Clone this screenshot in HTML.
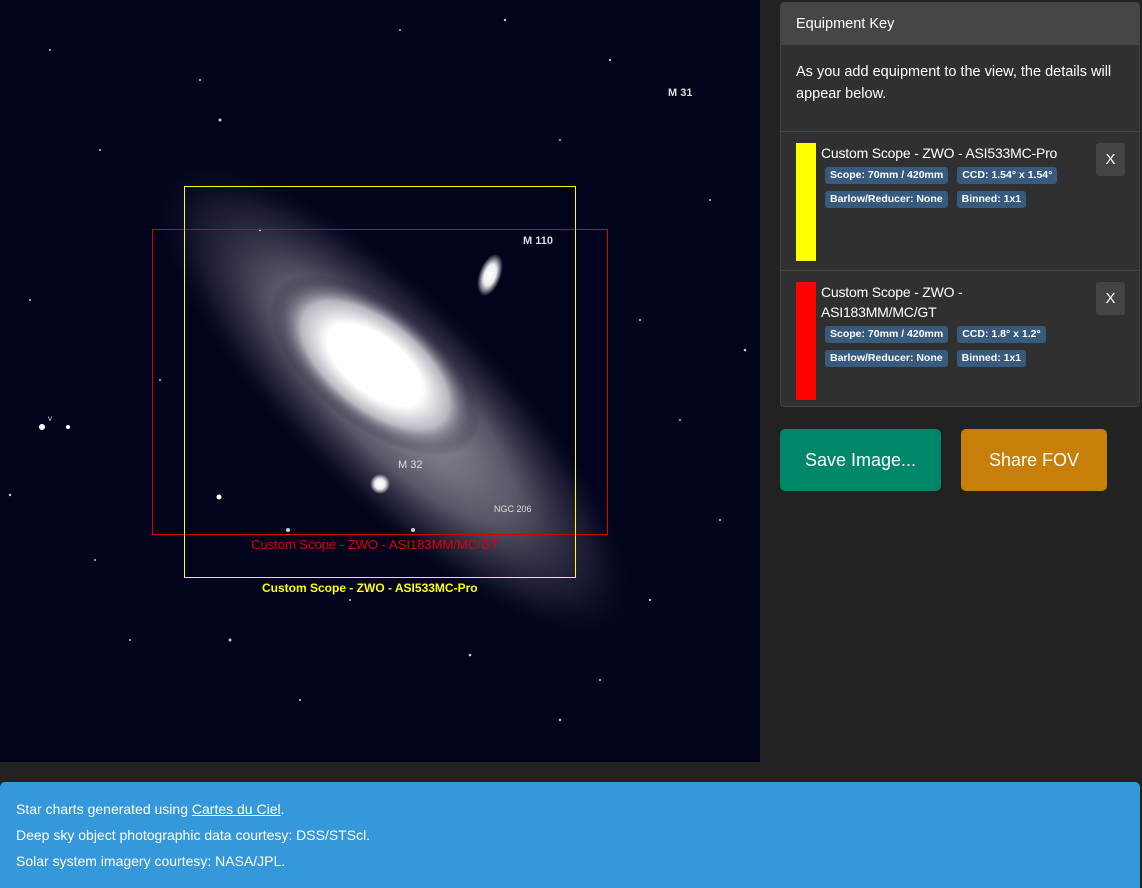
<!DOCTYPE html>
<html><head><meta charset="utf-8"><style>
body{margin:0;width:1142px;height:888px;background:#222;font-family:"Liberation Sans",sans-serif;position:relative;overflow:hidden;color:#fff}
.sky{position:absolute;left:0;top:0;width:760px;height:762px;background:#02031d}
.panel{position:absolute;left:780px;top:2px;width:358px;height:403px;background:#303030;border:1px solid #444;border-radius:4px;overflow:hidden}
.hd{height:42px;background:#464646;font-size:14.5px;line-height:42px;padding-left:15px}
.intro{font-size:14.5px;line-height:22px;padding:16px 15px 0;height:70px;border-bottom:1px solid #444}
.item{position:relative;height:138px;border-bottom:1px solid #444}
.bar{position:absolute;left:15px;top:11px;width:20px;height:118px}
.tt{position:absolute;left:40px;top:11px;font-size:14px;line-height:20px;width:270px;letter-spacing:-0.2px}
.x{position:absolute;right:14px;top:11px;width:29px;height:33px;background:#444;border-radius:3px;text-align:center;line-height:33px;font-size:15px}
.b{display:inline-block;background:#375a7f;font-size:10.5px;font-weight:bold;padding:2px 5px;border-radius:3px;margin:3px 5px 3px 4px;line-height:13px;letter-spacing:0}
.btn{position:absolute;top:429px;height:62px;border-radius:5px;font-size:18px;line-height:62px;text-align:center}
.ft{position:absolute;left:0;top:782px;width:1140px;height:106px;background:#3498db;border-radius:5px 5px 0 0;font-size:14px;line-height:26px;padding:14px 16px 0;box-sizing:border-box}
</style></head><body>
<div class="sky">
<svg width="760" height="762" viewBox="0 0 760 762">
<defs>
<radialGradient id="g1"><stop offset="0" stop-color="#fff"/><stop offset=".45" stop-color="#fff"/><stop offset=".7" stop-color="#c0c0c8" stop-opacity=".9"/><stop offset="1" stop-color="#02031d" stop-opacity="0"/></radialGradient>
<radialGradient id="g2"><stop offset="0" stop-color="#b0b0b8" stop-opacity=".9"/><stop offset=".5" stop-color="#7a7a86" stop-opacity=".7"/><stop offset=".8" stop-color="#3a3a50" stop-opacity=".4"/><stop offset="1" stop-color="#02031d" stop-opacity="0"/></radialGradient>
<radialGradient id="g3"><stop offset="0" stop-color="#fff"/><stop offset=".5" stop-color="#eee"/><stop offset="1" stop-color="#fff" stop-opacity="0"/></radialGradient>
</defs>
<ellipse cx="395" cy="400" rx="330" ry="105" transform="rotate(45 395 400)" fill="url(#g2)"/>
<ellipse cx="375" cy="365" rx="125" ry="62" transform="rotate(38 375 365)" fill="url(#g1)"/>
<ellipse cx="490" cy="275" rx="11" ry="22" transform="rotate(20 490 275)" fill="url(#g3)"/>
<circle cx="380" cy="484" r="10" fill="url(#g3)"/>
<circle cx="42" cy="427" r="3" fill="#fff"/><circle cx="68" cy="427" r="2" fill="#fff"/><circle cx="219" cy="497" r="2.5" fill="#fff"/>
<g fill="#ccc">
<circle cx="610" cy="60" r="1.2"/><circle cx="100" cy="150" r="1"/><circle cx="30" cy="300" r="1"/><circle cx="745" cy="350" r="1.3"/><circle cx="680" cy="420" r="1"/><circle cx="650" cy="600" r="1.2"/><circle cx="470" cy="655" r="1.3"/><circle cx="130" cy="640" r="1"/><circle cx="300" cy="700" r="1"/><circle cx="560" cy="720" r="1.2"/><circle cx="720" cy="520" r="1"/><circle cx="10" cy="495" r="1.2"/><circle cx="200" cy="80" r="1"/><circle cx="400" cy="30" r="1"/><circle cx="560" cy="140" r="1"/><circle cx="710" cy="200" r="1"/><circle cx="95" cy="560" r="1"/><circle cx="260" cy="230" r="1.2"/><circle cx="640" cy="320" r="1"/><circle cx="230" cy="640" r="1.5"/><circle cx="600" cy="680" r="1"/><circle cx="350" cy="600" r="1"/><circle cx="288" cy="530" r="2"/><circle cx="413" cy="530" r="2"/><circle cx="220" cy="120" r="1.5"/><circle cx="505" cy="20" r="1.2"/><circle cx="50" cy="50" r="1"/><circle cx="160" cy="380" r="1"/>
</g>
<rect x="152.5" y="229.5" width="455" height="305" fill="none" stroke="#d00" stroke-width="1"/>
<rect x="184.5" y="186.5" width="391" height="391" fill="none" stroke="#ff0" stroke-width="1"/>
<g font-family="Liberation Sans" font-weight="bold" fill="#ddd">
<text x="668" y="96" font-size="11">M 31</text><text x="523" y="244" font-size="11">M 110</text>
<text x="398" y="468" font-size="11" font-weight="normal">M 32</text><text x="494" y="512" font-size="9" font-weight="normal">NGC 206</text>
<text x="48" y="421" font-size="8" font-weight="normal">v</text></g>
<text x="251" y="549" font-size="13" fill="#d00" font-family="Liberation Sans">Custom Scope - ZWO - ASI183MM/MC/GT</text>
<text x="262" y="592" font-size="12" font-weight="bold" fill="#ff0" font-family="Liberation Sans">Custom Scope - ZWO - ASI533MC-Pro</text>
</svg></div>
<div class="panel">
<div class="hd">Equipment Key</div>
<div class="intro">As you add equipment to the view, the details will appear below.</div>
<div class="item"><div class="bar" style="background:#ff0"></div>
<div class="tt">Custom Scope - ZWO - ASI533MC-Pro<br><span class="b">Scope: 70mm / 420mm</span><span class="b">CCD: 1.54° x 1.54°</span><br><span class="b">Barlow/Reducer: None</span><span class="b">Binned: 1x1</span></div><div class="x">X</div></div>
<div class="item" style="border:0"><div class="bar" style="background:#f00"></div>
<div class="tt">Custom Scope - ZWO -<br>ASI183MM/MC/GT<br><span class="b">Scope: 70mm / 420mm</span><span class="b">CCD: 1.8° x 1.2°</span><br><span class="b">Barlow/Reducer: None</span><span class="b">Binned: 1x1</span></div><div class="x">X</div></div>
</div>
<div class="btn" style="left:780px;width:161px;background:#00876a">Save Image...</div>
<div class="btn" style="left:961px;width:146px;background:#c87f0a">Share FOV</div>
<div class="ft">Star charts generated using <u>Cartes du Ciel</u>.<br>Deep sky object photographic data courtesy: DSS/STScl.<br>Solar system imagery courtesy: NASA/JPL.</div>
</body></html>
